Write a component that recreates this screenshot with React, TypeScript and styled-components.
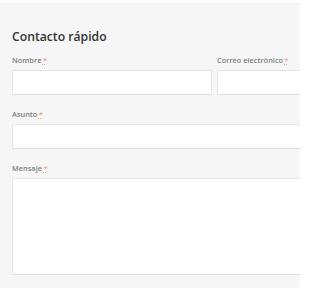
import React from "react";
import styled, { createGlobalStyle } from "styled-components";

const GlobalStyle = createGlobalStyle`
  html, body {
    margin: 0;
    padding: 0;
    background: #ffffff;
    overflow: hidden;
  }
  body {
    font-family: "Open Sans", "Liberation Sans", sans-serif;
  }
`;

const Viewport = styled.div`
  width: 300px;
  height: 300px;
  overflow: hidden;
`;

const Panel = styled.section`
  width: 440px;
  background: #f6f6f6;
  border-top: 1px solid #efefef;
  margin-top: 3px;
  padding: 24px 12px 13px 12px;
`;

const Title = styled.h3`
  margin: 0 0 9px 0;
  font-size: 12.2px;
  font-weight: 600;
  color: #333333;
  line-height: 18px;
`;

const Row = styled.div`
  display: grid;
  grid-template-columns: 200px 200px;
  gap: 5px;
`;

const Field = styled.div<{ $last?: boolean }>`
  display: flex;
  flex-direction: column;
  margin-bottom: ${({ $last }) => ($last ? "0" : "14px")};
`;

const Label = styled.label`
  font-size: 7.4px;
  font-weight: 600;
  color: #7f7f7f;
  line-height: 10px;
  margin-bottom: 5px;
`;

const Required = styled.abbr`
  color: #e9a47f;
  text-decoration: underline dotted;
  margin-left: 1.5px;
`;

const Input = styled.input<{ $full?: boolean }>`
  box-sizing: border-box;
  height: 25px;
  width: ${({ $full }) => ($full ? "405px" : "100%")};
  border: 1px solid #e6e6e6;
  border-bottom-color: #dddddd;
  border-radius: 2px;
  background: #ffffff;
  outline: none;
`;

const TextArea = styled.textarea`
  box-sizing: border-box;
  display: block;
  height: 97px;
  width: 405px;
  border: 1px solid #e6e6e6;
  border-bottom-color: #dddddd;
  border-radius: 2px;
  background: #ffffff;
  resize: none;
  outline: none;
`;

const FieldLabel = ({ text }: { text: string }) => (
  <Label>
    {text}
    <Required title="obligatorio">*</Required>
  </Label>
);

export default function App() {
  return (
    <Viewport>
      <GlobalStyle />
      <Panel>
        <Title>Contacto rápido</Title>
        <Row>
          <Field>
            <FieldLabel text="Nombre" />
            <Input type="text" />
          </Field>
          <Field>
            <FieldLabel text="Correo electrónico" />
            <Input type="email" />
          </Field>
        </Row>
        <Field>
          <FieldLabel text="Asunto" />
          <Input type="text" $full />
        </Field>
        <Field $last>
          <FieldLabel text="Mensaje" />
          <TextArea />
        </Field>
      </Panel>
    </Viewport>
  );
}
